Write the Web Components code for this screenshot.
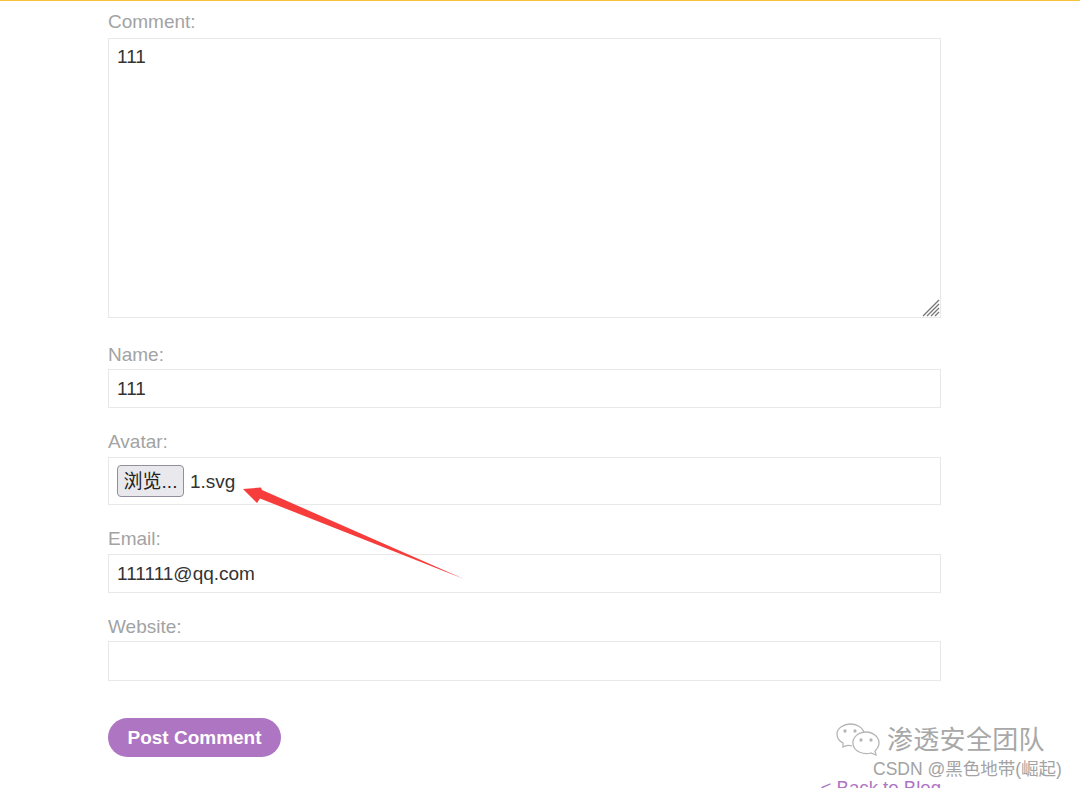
<!DOCTYPE html>
<html>
<head>
<meta charset="utf-8">
<style>
  html, body { margin: 0; height: 788px; overflow: hidden; background: #fff; }
  body { font-family: "Liberation Sans", "Noto Sans CJK SC", sans-serif; }
</style>
</head>
<body>
<blog-page>
  <form-field slot="fields" label="Comment:" kind="area" value="111" style="--h:280px;--lab:6px;--gap:26px"></form-field>
  <form-field slot="fields" label="Name:" value="111" style="--h:39px;--lab:4px;--gap:23px"></form-field>
  <form-field slot="fields" label="Avatar:" kind="file" value="1.svg" style="--h:48px;--lab:5px;--gap:23px"></form-field>
  <form-field slot="fields" label="Email:" value="111111@qq.com" style="--h:39px;--lab:5px;--gap:23px"></form-field>
  <form-field slot="fields" label="Website:" value="" style="--h:40px;--lab:4px;--gap:37px"></form-field>
  <post-button slot="fields">Post Comment</post-button>
  <back-link slot="fields">&lt; Back to Blog</back-link>
</blog-page>
<note-arrow></note-arrow>
<water-mark></water-mark>

<script>
class BlogPage extends HTMLElement {
  connectedCallback() {
    this.attachShadow({mode: "open"});
    this.shadowRoot.innerHTML = `
      <style>
        :host { display: block; height: 788px; overflow: hidden; border-top: 1px solid #f8c33a; box-sizing: border-box; }
        .form { display: flex; flex-direction: column; margin-left: 108px; width: 833px; padding-top: 10px; }
      </style>
      <div class="form"><slot name="fields"></slot></div>
    `;
  }
}

class FormField extends HTMLElement {
  connectedCallback() {
    this.attachShadow({mode: "open"});
    const kind = this.getAttribute("kind") || "input";
    const value = this.getAttribute("value");
    let inner = `<span>${value}</span>`;
    if (kind === "file") {
      inner = `<span class="browse">浏览...</span><span>${value}</span>`;
    }
    if (kind === "area") {
      inner += `
        <svg class="grip" width="18" height="18" viewBox="0 0 18 18">
          <path d="M1 17L17 1M5 17L17 5M9 17L17 9M13 17L17 13" stroke="#777" stroke-width="1.3" fill="none"/>
        </svg>`;
    }
    this.shadowRoot.innerHTML = `
      <style>
        :host { display: block; margin-bottom: var(--gap); }
        label { display: block; font-size: 19px; line-height: 21px; color: #a3a3a3; margin-bottom: var(--lab); }
        .box {
          position: relative;
          display: flex;
          align-items: ${kind === "area" ? "flex-start" : "center"};
          gap: 6px;
          box-sizing: border-box;
          height: var(--h);
          padding: ${kind === "area" ? "7px" : "0"} 8px 0;
          border: 1px solid #e8e8e8;
          font-size: 19px;
          line-height: 21px;
          color: #333;
        }
        .browse {
          box-sizing: border-box;
          height: 32px;
          width: 67px;
          border: 1px solid #8f8f9d;
          border-radius: 4px;
          background: #e9e9ed;
          color: #222;
          text-align: center;
          line-height: 32px;
          font-size: 19px;
          white-space: nowrap;
        }
        .grip { position: absolute; right: 0; bottom: 0; }
      </style>
      <label>${this.getAttribute("label")}</label>
      <div class="box">${inner}</div>
    `;
  }
}

class PostButton extends HTMLElement {
  connectedCallback() {
    this.attachShadow({mode: "open"});
    this.shadowRoot.innerHTML = `
      <style>
        :host {
          display: flex; align-items: center; justify-content: center;
          width: 173px; height: 39px; border-radius: 20px;
          background: #ae75c3; color: #fff;
          font-size: 19px; font-weight: bold;
        }
      </style>
      <slot></slot>
    `;
  }
}

class BackLink extends HTMLElement {
  connectedCallback() {
    this.attachShadow({mode: "open"});
    this.shadowRoot.innerHTML = `
      <style>
        :host { display: block; text-align: right; margin-top: 20px; font-size: 18.6px; line-height: 21px; color: #ae75c3; }
      </style>
      <slot></slot>
    `;
  }
}

class NoteArrow extends HTMLElement {
  connectedCallback() {
    this.attachShadow({mode: "open"});
    this.shadowRoot.innerHTML = `
      <style>
        :host { position: absolute; left: 240px; top: 480px; width: 230px; height: 105px; }
      </style>
      <svg width="230" height="105" viewBox="0 0 230 105">
        <path d="M224 99L22 10L21 7.5L3 9L17 23L20 18.5Z" fill="#f73c3c"/>
      </svg>
    `;
  }
}

class WaterMark extends HTMLElement {
  connectedCallback() {
    this.attachShadow({mode: "open"});
    this.shadowRoot.innerHTML = `
      <style>
        :host { position: absolute; left: 836px; top: 722px; width: 244px; height: 60px; color: #9a9a9a; }
        .row { display: flex; align-items: center; height: 36px; }
        .title { font-size: 26px; line-height: 36px; margin-left: 7px; color: #a8a8a8; white-space: nowrap; letter-spacing: .3px; }
        .csdn { font-size: 17.5px; line-height: 22px; margin-left: 37px; color: #a3a3a3; white-space: nowrap; }
      </style>
      <div class="row">
        <svg width="44" height="36" viewBox="0 0 44 36" fill="none" stroke="#b5b5b5" stroke-width="1.3">
          <path d="M16 24C13 23 10 23 7 25L7 21C3 19 1 15 1 12C1 6 8 2 14 2C20 2 27 5 28 11"/>
          <path d="M30 10C37 10 43 15 43 21C43 25 41 27 39 29L40 33L35 31C28 33 18 30 17 22C16 15 23 10 30 10Z"/>
          <circle cx="9" cy="9" r="1" fill="#b5b5b5"/><circle cx="19" cy="9" r="1" fill="#b5b5b5"/>
          <circle cx="25" cy="18" r="1" fill="#b5b5b5"/><circle cx="35" cy="18" r="1" fill="#b5b5b5"/>
        </svg>
        <span class="title">渗透安全团队</span>
      </div>
      <div class="csdn">CSDN @黑色地带(崛起)</div>
    `;
  }
}

customElements.define("blog-page", BlogPage);
customElements.define("form-field", FormField);
customElements.define("post-button", PostButton);
customElements.define("back-link", BackLink);
customElements.define("note-arrow", NoteArrow);
customElements.define("water-mark", WaterMark);
</script>
</body>
</html>
